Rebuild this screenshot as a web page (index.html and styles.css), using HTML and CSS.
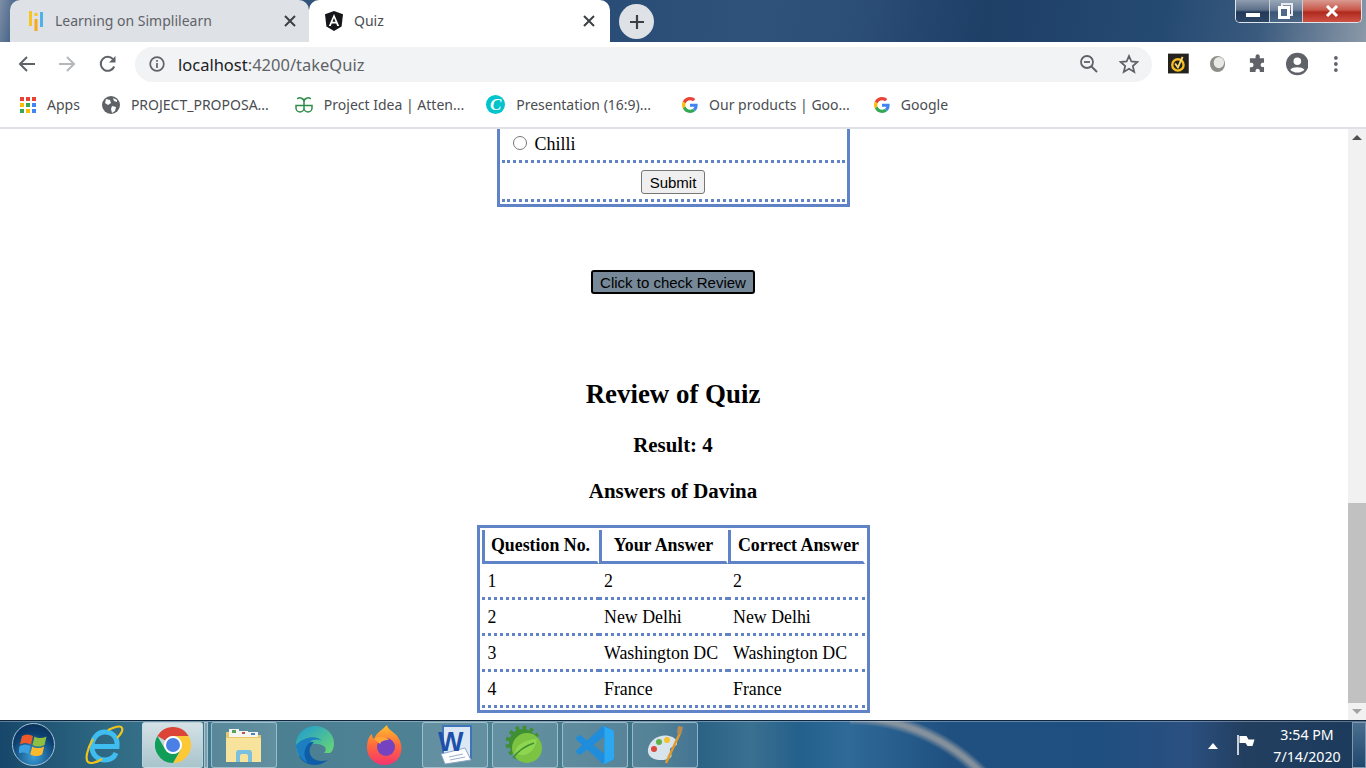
FILE: index.html
```html
<!DOCTYPE html>
<html lang="en">
<head>
    <meta charset="UTF-8">
    <title>Quiz</title>
    <link rel="stylesheet" href="styles.css">
</head>
<body>
    <svg class="defs" width="0" height="0">
        <symbol id="g-logo" viewBox="0 0 48 48">
            <path fill="#EA4335" d="M24 9.5c3.54 0 6.71 1.22 9.21 3.6l6.85-6.85C35.9 2.38 30.47 0 24 0 14.62 0 6.51 5.38 2.56 13.22l7.98 6.19C12.43 13.72 17.74 9.5 24 9.5z"/>
            <path fill="#4285F4" d="M46.98 24.55c0-1.57-.15-3.09-.38-4.55H24v9.02h12.94c-.58 2.96-2.26 5.48-4.78 7.18l7.73 6c4.51-4.18 7.09-10.36 7.09-17.65z"/>
            <path fill="#FBBC05" d="M10.53 28.59c-.48-1.45-.76-2.99-.76-4.59s.27-3.14.76-4.59l-7.98-6.19C.92 16.46 0 20.12 0 24c0 3.88.92 7.54 2.56 10.78l7.97-6.19z"/>
            <path fill="#34A853" d="M24 48c6.48 0 11.93-2.13 15.89-5.81l-7.73-6c-2.15 1.45-4.92 2.3-8.16 2.3-6.26 0-11.57-4.22-13.47-9.91l-7.98 6.19C6.51 42.62 14.62 48 24 48z"/>
        </symbol>
    </svg>

    <!-- Tab strip -->
    <div class="frame">
        <div class="tab tab-off">
            <svg width="16" height="20" viewBox="0 0 16 20">
                <rect x="1" y="0" width="3" height="15" fill="#f7c325"/>
                <rect x="6.5" y="8" width="3" height="12" fill="#f7a81b"/>
                <rect x="6.5" y="2" width="3" height="3" fill="#f7c325"/>
                <rect x="12" y="1" width="3" height="15" fill="#4fb3ea"/>
            </svg>
            <span class="tab-title">Learning on Simplilearn</span>
            <svg class="tab-close" width="12" height="12" viewBox="0 0 12 12"><path d="M1 1l10 10M11 1 1 11" stroke="#3c4043" stroke-width="2"/></svg>
        </div>
        <div class="tab tab-on">
            <svg width="18" height="20" viewBox="0 0 18 20">
                <path d="M9 0 18 3.2 16.6 15.6 9 20 1.4 15.6 0 3.2z" fill="#16161a"/>
                <path d="M9 3 3.8 15h2l1-2.6h4.4l1 2.6h2L9 3zm-1.5 7.8L9 7l1.5 3.800z" fill="#fff"/>
            </svg>
            <span class="tab-title">Quiz</span>
            <svg class="tab-close" width="12" height="12" viewBox="0 0 12 12"><path d="M1 1l10 10M11 1 1 11" stroke="#3c4043" stroke-width="2"/></svg>
        </div>
        <div class="new-tab">
            <svg width="16" height="16" viewBox="0 0 16 16"><path d="M8 1v14M1 8h14" stroke="#3c4043" stroke-width="2.200"/></svg>
        </div>
        <div class="win-controls">
            <div class="win-btn win-min"><span class="min-bar"></span></div>
            <div class="win-btn win-max"><span class="max-back"></span><span class="max-front"></span></div>
            <div class="win-btn win-close">
                <svg width="14" height="12" viewBox="0 0 14 12"><path d="M2 1l10 10M12 1 2 11" stroke="#fff" stroke-width="3"/></svg>
            </div>
        </div>
    </div>

    <!-- Address bar -->
    <div class="toolbar">
        <svg class="nav-icon" width="18" height="18" viewBox="0 0 18 18"><path d="M17 9H2.500M9 2 2 9l7 7" fill="none" stroke="#5f6368" stroke-width="2"/></svg>
        <svg class="nav-icon" width="18" height="18" viewBox="0 0 18 18"><path d="M1 9h14.500M9 2l7 7-7 7" fill="none" stroke="#b4b7bb" stroke-width="2"/></svg>
        <svg class="nav-icon" width="18" height="18" viewBox="0 0 18 18"><path d="M15.200 11.500A7 7 0 1 1 14 4.200" fill="none" stroke="#5f6368" stroke-width="2"/><path d="M16.500 1v6.500H10z" fill="#5f6368"/></svg>
        <div class="omnibox">
            <svg width="16" height="16" viewBox="0 0 16 16"><circle cx="8" cy="8" r="6.800" fill="none" stroke="#5f6368" stroke-width="1.700"/><path d="M8 7v5M8 4v1.800" stroke="#5f6368" stroke-width="1.700"/></svg>
            <span class="url"><span class="url-host">localhost</span>:4200/takeQuiz</span>
            <svg class="zoom-out" width="20" height="20" viewBox="0 0 20 20"><circle cx="8" cy="8" r="6" fill="none" stroke="#5f6368" stroke-width="1.800"/><path d="M5 8h6" stroke="#5f6368" stroke-width="1.800"/><path d="M12.500 12.500 18 18" stroke="#5f6368" stroke-width="2"/></svg>
            <svg class="star" width="20" height="20" viewBox="0 0 20 20"><path d="M10 2l2.400 5.500 6 .5-4.600 4 1.400 5.900L10 14.800 4.800 17.900l1.400-5.900-4.600-4 6-.5z" fill="none" stroke="#5f6368" stroke-width="1.800"/></svg>
        </div>
        <div class="ext-icons">
            <svg width="22" height="22" viewBox="0 0 22 22"><rect width="22" height="21" fill="#24221f"/><circle cx="10.500" cy="12" r="6" fill="none" stroke="#f5bd1f" stroke-width="2.500"/><path d="M7.500 10.500l3 4 5-11" fill="none" stroke="#f5d76e" stroke-width="2"/></svg>
            <svg width="18" height="20" viewBox="0 0 18 20"><ellipse cx="9" cy="10" rx="8" ry="8.500" fill="#8d8d8a"/><ellipse cx="10.500" cy="8.500" rx="5.500" ry="6" fill="#e8e8e4"/></svg>
            <svg width="20" height="20" viewBox="0 0 20 20"><path d="M8 1.500a2.300 2.300 0 0 1 4.500 0V4H17v4.800h-1.800a2.300 2.300 0 0 0 0 4.500H17V18.500H12.500v-1.700a2.300 2.300 0 0 0-4.500 0v1.700H2V13.500h1.500a2.400 2.400 0 0 0 0-4.800H2V4h6z" fill="#5f6368"/></svg>
            <svg width="24" height="24" viewBox="0 0 24 24"><circle cx="12" cy="12" r="12" fill="#5f6368"/><circle cx="12" cy="9" r="4" fill="#fff"/><path d="M4.500 18c2-3.500 13-3.500 15 0-3.500 4-11.500 4-15 0z" fill="#fff"/></svg>
            <svg width="4" height="18" viewBox="0 0 4 18"><circle cx="2" cy="2.500" r="2" fill="#5f6368"/><circle cx="2" cy="9" r="2" fill="#5f6368"/><circle cx="2" cy="15.500" r="2" fill="#5f6368"/></svg>
        </div>
    </div>

    <!-- Bookmarks -->
    <div class="bookmarks">
        <div class="bm">
            <svg width="16" height="16" viewBox="0 0 16 16">
                <rect width="4" height="4" fill="#ea4335"/><rect x="6" width="4" height="4" fill="#ea4335"/><rect x="12" width="4" height="4" fill="#ea4335"/>
                <rect y="6" width="4" height="4" fill="#fbbc05"/><rect x="6" y="6" width="4" height="4" fill="#34a853"/><rect x="12" y="6" width="4" height="4" fill="#4285f4"/>
                <rect y="12" width="4" height="4" fill="#34a853"/><rect x="6" y="12" width="4" height="4" fill="#fbbc05"/><rect x="12" y="12" width="4" height="4" fill="#4285f4"/>
            </svg>
            <span>Apps</span>
        </div>
        <div class="bm">
            <svg width="18" height="18" viewBox="0 0 18 18"><circle cx="9" cy="9" r="9" fill="#5f6368"/><path d="M4 3l4 1 1 3-3 2-3-2zM10 10l4 1-1 4-3 2-1-4zM11 2l4 2v2l-3-1z" fill="#fff"/></svg>
            <span>PROJECT_PROPOSA...</span>
        </div>
        <div class="bm">
            <svg width="18" height="18" viewBox="0 0 18 18"><path d="M15.800 3A4 4 0 0 0 9 6V12A4 4 0 0 0 17 12V9.500H1V12A4 4 0 0 0 9 12V6A4 4 0 0 0 2.200 3" fill="none" stroke="#2f8d46" stroke-width="1.500"/></svg>
            <span>Project Idea | Atten...</span>
        </div>
        <div class="bm">
            <span class="canva-icon">C</span>
            <span>Presentation (16:9)...</span>
        </div>
        <div class="bm">
            <svg width="16" height="16"><use href="#g-logo"/></svg>
            <span>Our products | Goo...</span>
        </div>
        <div class="bm">
            <svg width="16" height="16"><use href="#g-logo"/></svg>
            <span>Google</span>
        </div>
    </div>

    <!-- Page -->
    <div class="viewport">
        <main class="page">
            <form class="quiz-card">
                <div class="quiz-row option-row">
                    <input type="radio" name="answer">
                    <label>Chilli</label>
                </div>
                <div class="quiz-row submit-row">
                    <button type="button" class="btn">Submit</button>
                </div>
            </form>

            <button type="button" class="btn btn-review">Click to check Review</button>

            <h2>Review of Quiz</h2>
            <h3>Result: 4</h3>
            <h3 class="answers-title">Answers of Davina</h3>

            <table class="review-table">
                <thead>
                    <tr>
                        <th class="col-no">Question No.</th>
                        <th class="col-yours">Your Answer</th>
                        <th class="col-correct">Correct Answer</th>
                    </tr>
                </thead>
                <tbody>
                    <tr><td>1</td><td>2</td><td>2</td></tr>
                    <tr><td>2</td><td>New Delhi</td><td>New Delhi</td></tr>
                    <tr><td>3</td><td>Washington DC</td><td>Washington DC</td></tr>
                    <tr><td>4</td><td>France</td><td>France</td></tr>
                </tbody>
            </table>
        </main>
        <div class="scrollbar">
            <div class="arrow arrow-up"></div>
            <div class="track"><div class="thumb"></div></div>
            <div class="arrow arrow-down"></div>
        </div>
    </div>

    <!-- Windows taskbar -->
    <div class="taskbar">
        <div class="start-orb">
            <svg width="30" height="28" viewBox="0 0 30 28">
                <path d="M3 5c3.500-2 7-2 11 0l-2 8.500c-4-2-7.500-2-11 0z" fill="#ef5a2a"/>
                <path d="M15.500 5.500c3.500 2 8 2 12 0l-2 8.500c-4 2-8 2-12 0z" fill="#8fbf3f"/>
                <path d="M.7 15c3.500-2 7-2 11 0l-2 8c-4-2-7.500-2-11 0z" fill="#3aa0e0"/>
                <path d="M13.200 15.500c3.500 2 8 2 12 0l-2 8c-4 2-8 2-12 0z" fill="#fdb92c"/>
            </svg>
        </div>
        <div class="task-slot slot-ie">
            <svg width="40" height="40" viewBox="0 0 40 40">
                <path d="M10 21.500h23C34 12 28 7 21 7 13 7 8 14 8 22c0 8 6 13 13 13 5 0 9-2 11-7" fill="none" stroke="#3fbdf0" stroke-width="5"/>
                <path d="M24 5c6-3 13-5 14-2 1 2-1 6-5 10M9 14C3 24 1 34 4 37c2 2 8 1 14-3" fill="none" stroke="#f0c41b" stroke-width="2.200"/>
            </svg>
        </div>
        <div class="task-btn task-active">
            <svg width="36" height="36" viewBox="0 0 36 36">
                <path d="M2.400 9A18 18 0 0 1 33.600 9H18A9 9 0 0 0 10.200 13.500z" fill="#db4437"/>
                <path d="M33.600 9A18 18 0 0 1 18 36L25.800 22.500A9 9 0 0 0 18 9z" fill="#fcc934"/>
                <path d="M18 36A18 18 0 0 1 2.400 9L10.200 22.500A9 9 0 0 0 25.800 22.500z" fill="#0f9d58"/>
                <circle cx="18" cy="18" r="9" fill="#fff"/>
                <circle cx="18" cy="18" r="7" fill="#4a7fe6"/>
            </svg>
        </div>
        <div class="task-sliver"></div>
        <div class="task-btn">
            <svg width="40" height="38" viewBox="0 0 40 38">
                <path d="M2 6h12l3 3h20v27H2z" fill="#e9c868"/>
                <rect x="5" y="3" width="10" height="8" fill="#f4f4f0"/><rect x="14" y="5" width="10" height="6" fill="#f4f4f0"/><rect x="24" y="6" width="10" height="5" fill="#f4f4f0"/>
                <rect x="8" y="4" width="4" height="3" fill="#5aa05a"/><rect x="18" y="6" width="3" height="2" fill="#c0504d"/><rect x="27" y="7" width="4" height="2" fill="#4f81bd"/>
                <path d="M2 12h35v24H2z" fill="#f7e39b"/>
                <path d="M12 36V27q0-3 3-3h10q3 0 3 3v9h-4v-6q0-2-2-2h-4q-2 0-2 2v6z" fill="#7cc0e0"/>
            </svg>
        </div>
        <div class="task-slot slot-edge">
            <svg width="40" height="40" viewBox="0 0 40 40">
                <path d="M20 1C9 1 1 10 1 20c0 4 1 8 3 11C9 18 22 16 30 22c1 2 1 4-1 6h6c3-2 4-6 4-10C39 9 31 1 20 1z" fill="url(#edge-a)"/>
                <path d="M4 31c3 6 9 9 16 9 5 0 9-2 13-5-6 2-14 1-17-4-3-5-1-10 3-14C12 16 6 22 4 31z" fill="#0f5ca8"/>
                <path d="M1 20C1 28 6 35 13 38c-5-6-5-15 2-21 3-3 8-3 12-1C23 10 9 11 1 20z" fill="#1d7fc2"/>
                <defs><linearGradient id="edge-a" x1="0" y1="0" x2="1" y2="1"><stop offset="0" stop-color="#1d98d6"/><stop offset="1" stop-color="#6fdc6a"/></linearGradient></defs>
            </svg>
        </div>
        <div class="task-slot slot-fox">
            <svg width="40" height="42" viewBox="0 0 40 42">
                <path d="M22 1c1 6 8 6 12 14 6 11 1 25-14 26C9 41 1 33 2 21c.5-5 2-9 5-11 0 3 1 4 2 5 2-6 7-8 13-14z" fill="url(#fox-a)"/>
                <circle cx="21" cy="23" r="9" fill="#7543c0"/>
                <path d="M9 15c5-3 11-3 15 1-5 0-8 1-9 4-2-2-4-3-6-5z" fill="#ffa436"/>
                <defs><linearGradient id="fox-a" x1="0" y1="0" x2="0" y2="1"><stop offset="0" stop-color="#ffc22e"/><stop offset=".5" stop-color="#ff6b3a"/><stop offset="1" stop-color="#f5336f"/></linearGradient></defs>
            </svg>
        </div>
        <div class="task-btn">
            <div class="word-icon">
                <svg class="word-sheets" width="36" height="40" viewBox="0 0 36 40">
                    <path d="M6 1h28v32H6z" fill="#dce7f5" stroke="#3f74b8" stroke-width="2"/>
                    <path d="M4 29l24-6 6 12-26 4z" fill="#fff" stroke="#8ea6c4"/>
                    <path d="M12 32l14-3M13 35l15-3" stroke="#9bb0cc"/>
                </svg>
                <span class="word-w">W</span>
            </div>
        </div>
        <div class="task-btn">
            <svg width="40" height="42" viewBox="0 0 40 42">
                <circle cx="18" cy="19" r="15" fill="none" stroke="#3f8f33" stroke-width="5" stroke-dasharray="3.500 3.500"/>
                <circle cx="18" cy="19" r="14" fill="#3f8f33"/>
                <circle cx="22" cy="24" r="15" fill="#7cc344"/>
                <path d="M10 30c0-9 9-14 22-15-1 9-7 16-15 16-3 0-5-1-7-1z" fill="#8fd650"/>
                <path d="M8 34c5-7 12-12 21-15" fill="none" stroke="#3f8f33" stroke-width="1.500"/>
            </svg>
        </div>
        <div class="task-btn">
            <svg width="38" height="38" viewBox="0 0 100 100">
                <path fill="#1f8cdc" fill-rule="evenodd" d="M70.9 99.3C72.5 99.9 74.3 99.9 75.9 99.100L96.500 89.200C98.600 88.200 100 86 100 83.600V16.400C100 14 98.600 11.800 96.500 10.800L75.900.9C73.800-.1 71.300.1 69.500 1.400 69.300 1.600 69 1.800 68.800 2.100L29.400 38 12.200 25C10.600 23.800 8.400 23.900 6.900 25.200L1.400 30.300C-.5 31.900-.5 34.800 1.400 36.400L16.200 50 1.400 63.600C-.5 65.200-.5 68.100 1.400 69.700L6.900 74.800C8.400 76.100 10.600 76.200 12.200 75L29.400 62 68.800 97.900C69.400 98.500 70.100 99 70.900 99.300ZM75 27.300 45.100 50 75 72.700Z"/>
                <path fill="#2aa8f2" d="M71 .4 96.500 10.800Q100 13 100 16.400V83.600Q100 87 96.500 89.200L75.900 99.100Q73.500 100 71 99.300 75 96 75 92V8Q75 4 71 .4z"/>
            </svg>
        </div>
        <div class="task-btn">
            <svg width="40" height="40" viewBox="0 0 40 40">
                <path d="M3 24C5 14 15 9 24 11c5 1 9 4 8 8-1 3-6 2-7 5-1 4 4 6 0 9-6 4-24 3-22-9z" fill="#d8e4ec"/>
                <circle cx="9" cy="24" r="3" fill="#d9483b"/>
                <circle cx="14" cy="17" r="3" fill="#5fb04c"/>
                <circle cx="22" cy="15" r="3" fill="#f2c32c"/>
                <path d="M35 8 21 38" stroke="#e09a2b" stroke-width="2.500"/>
                <path d="M33 1l5 1-2 8-4-2z" fill="#b78a55"/>
            </svg>
        </div>
        <div class="tray">
            <svg class="tray-up" width="10" height="6" viewBox="0 0 10 6"><path d="M5 0l5 6H0z" fill="#fff"/></svg>
            <svg class="tray-flag" width="18" height="20" viewBox="0 0 18 20"><path d="M1 0v20" stroke="#fff" stroke-width="1.500"/><path d="M2.500 1h7l2 3.500h6l-2 6.500h-5l-2-3h-6z" fill="#fff"/></svg>
            <div class="clock">
                <div>3:54 PM</div>
                <div>7/14/2020</div>
            </div>
        </div>
        <div class="show-desktop"></div>
    </div>
</body>
</html>
```

FILE: styles.css
```css
/* General */
* {
    box-sizing: border-box;
}

html, body {
    height: 100%;
}

body {
    margin: 0;
    height: 768px;
    display: flex;
    flex-direction: column;
    overflow: hidden;
    background: #fff;
    font-family: "Liberation Serif", serif;
}

.defs {
    position: absolute;
}

/* Tab strip */
.frame {
    height: 42px;
    flex: none;
    display: flex;
    padding-left: 10px;
    background: linear-gradient(100deg, #7e8ea6 0, #3f5f84 1.500%, #274b74 40%, #2e527a 55%, #2c4f78 62%, #1e3f66 72%, #254a72 85%, #3a5a7e 92%, #8b99a8 100%);
}

.tab {
    height: 42px;
    padding-bottom: 1px;
    display: flex;
    align-items: center;
    border-radius: 10px 10px 0 0;
    font-family: "Noto Sans", sans-serif;
    font-size: 14px;
}

.tab-off {
    width: 299px;
    padding-left: 18px;
    padding-right: 13px;
    background: #dee1e6;
    color: #5f6368;
}

.tab-on {
    width: 301px;
    padding-left: 16px;
    padding-right: 15px;
    background: #fff;
    color: #4a4d51;
}

.tab-title {
    flex: 1;
    margin-left: 11px;
}

.new-tab {
    width: 35px;
    height: 35px;
    margin: 4px 0 0 9px;
    border-radius: 50%;
    background: #dee1e6;
    display: flex;
    align-items: center;
    justify-content: center;
}

.win-controls {
    margin: 0 4px 0 auto;
    width: 127px;
    height: 23px;
    display: flex;
    border: 1px solid #dfe5ec;
    border-top: none;
    border-radius: 0 0 5px 5px;
    overflow: hidden;
}

.win-btn {
    display: flex;
    align-items: center;
    justify-content: center;
    position: relative;
}

.win-min {
    width: 34px;
    background: linear-gradient(#8f9db0, #5b6f88 45%, #23395a 55%, #2e4766);
    border-right: 1px solid #c5cdd6;
}

.min-bar {
    width: 14px;
    height: 4px;
    margin-top: 8px;
    background: #fff;
}

.win-max {
    width: 33px;
    background: linear-gradient(#99a7b8, #6d8099 45%, #3c5676 55%, #4c6685);
    border-right: 1px solid #c5cdd6;
}

.max-back {
    position: absolute;
    top: 3px;
    left: 11px;
    width: 12px;
    height: 13px;
    border: 2px solid #e8ecf0;
}

.max-front {
    position: absolute;
    top: 6px;
    left: 8px;
    width: 12px;
    height: 13px;
    border: 3px solid #fff;
    background: #50698a;
}

.win-close {
    flex: 1;
    background: linear-gradient(#d99a90, #c9574a 45%, #b02a1e 55%, #cf5144);
}

/* Address bar */
.toolbar {
    height: 42px;
    flex: none;
    display: flex;
    align-items: center;
    padding-left: 18px;
    background: #fff;
}

.nav-icon {
    margin: 2px 22px 0 0;
    flex: none;
}

.toolbar .nav-icon:nth-child(3) {
    margin-right: 18px;
    margin-left: 1px;
}

.omnibox {
    width: 1017px;
    height: 35px;
    margin-top: 2px;
    padding: 0 13px 0 14px;
    display: flex;
    align-items: center;
    border-radius: 18px;
    background: #f1f3f4;
    font-family: "Noto Sans", sans-serif;
    font-size: 16.500px;
    color: #5f6368;
}

.url {
    margin-left: 13px;
    flex: 1;
}

.url-host {
    color: #202124;
}

.zoom-out {
    margin-right: 20px;
}

.ext-icons {
    width: 186px;
    margin-top: 2px;
    padding-left: 16px;
    display: flex;
    align-items: center;
    gap: 20px;
}

.ext-icons svg:nth-child(3) {
    margin-left: 2px;
}

.ext-icons svg:nth-child(4) {
    margin-left: -1px;
}

.ext-icons svg:nth-child(5) {
    margin-left: 6px;
}

/* Bookmarks */
.bookmarks {
    height: 45px;
    flex: none;
    display: flex;
    align-items: center;
    padding: 0 0 2px 20px;
    border-bottom: 2px solid #dee1e6;
    font-family: "Noto Sans", sans-serif;
    font-size: 14px;
    color: #4a4d51;
}

.bm {
    display: flex;
    align-items: center;
    gap: 11px;
    margin-right: 22px;
    white-space: nowrap;
}

.bm:nth-child(2) {
    margin-right: 26px;
}

.bm:nth-child(3) {
    margin-right: 22px;
}

.bm:nth-child(4) {
    margin-right: 31px;
}

.bm:nth-child(5) {
    margin-right: 24px;
}

.canva-icon {
    width: 19px;
    height: 19px;
    border-radius: 50%;
    background: #00c4cc;
    color: #fff;
    font-family: "Liberation Serif", serif;
    font-style: italic;
    font-weight: bold;
    font-size: 17px;
    line-height: 19px;
    text-align: center;
}

/* Page */
.viewport {
    height: 591px;
    flex: none;
    display: flex;
}

.page {
    flex: 1;
    min-width: 0;
    overflow: hidden;
    padding-right: 2px;
    text-align: center;
    color: #000;
    font-size: 16px;
}

.quiz-card {
    width: 353px;
    margin: 0 auto;
    padding: 0 2px 2px;
    border: 3px solid #6082c6;
    border-top: none;
}

.quiz-row {
    border-bottom: 3px dotted #6082c6;
}

.option-row {
    height: 34px;
    display: flex;
    align-items: center;
    padding-left: 8px;
    font-size: 18px;
}

.option-row input {
    margin: 0 8px 3px 3px;
    width: 14px;
    height: 14px;
}

.submit-row {
    height: 39px;
    padding-top: 7px;
}

.btn {
    width: 64px;
    height: 24px;
    padding: 1px 0 0;
    font-family: "Liberation Sans", sans-serif;
    font-size: 15px;
    color: #000;
    background: #efefef;
    border: 1px solid #767676;
    border-radius: 3px;
}

.btn-review {
    display: block;
    margin: 63px auto 0;
    width: 164px;
    background: #778899;
    border: 2px solid #000;
}

h2 {
    margin: 87px 0 0;
    font-size: 26.900px;
    line-height: 27px;
}

h3 {
    margin: 27px 0 0;
    font-size: 20.900px;
    line-height: 21px;
}

h3.answers-title {
    margin-top: 25px;
}

.review-table {
    width: 393px;
    margin: 23px auto 0;
    padding: 2px;
    table-layout: fixed;
    border-collapse: separate;
    border-spacing: 0;
    border: 3px solid #6082c6;
    text-align: left;
}

.review-table th {
    height: 34px;
    padding: 0 4px;
    border-left: 3px solid #6082c6;
    border-right: 2px solid transparent;
    border-bottom: 3px solid #6082c6;
    font-size: 17.850px;
    text-align: center;
    white-space: nowrap;
}

.review-table th.col-correct {
    padding: 0 1px 0 5px;
}

.col-no {
    width: 117px;
}

.col-yours {
    width: 129px;
}

.review-table td {
    height: 36px;
    padding: 1px 0 0 5.500px;
    border-bottom: 3px dotted #6082c6;
    font-size: 17.850px;
    white-space: nowrap;
}

.review-table td:first-child {
    padding-left: 6px;
}

/* Scrollbar */
.scrollbar {
    width: 18px;
    flex: none;
    display: flex;
    flex-direction: column;
    background: #f1f1f1;
}

.arrow {
    height: 17px;
    flex: none;
    display: flex;
    align-items: center;
    justify-content: center;
}

.arrow::before {
    content: "";
    border-left: 5px solid transparent;
    border-right: 5px solid transparent;
}

.arrow-up::before {
    border-bottom: 5px solid #505050;
}

.arrow-down::before {
    border-top: 5px solid #a3a3a3;
}

.track {
    flex: 1;
    display: flex;
    flex-direction: column;
    justify-content: flex-end;
}

.thumb {
    height: 200px;
    background: #c1c1c1;
}

/* Taskbar */
.taskbar {
    height: 48px;
    flex: none;
    display: flex;
    align-items: center;
    padding-left: 12px;
    border-top: 1px solid #10263e;
    box-shadow: inset 0 1px rgba(255, 255, 255, 0.300);
    background:
        radial-gradient(circle 200px at 0 180px, transparent 176px, rgba(165, 165, 165, 0.750) 182px, rgba(165, 165, 165, 0.750) 185px, transparent 191px) 850px 0 / 200px 48px no-repeat,
        linear-gradient(90deg, #17476a 0, #2f6a84 8%, #4b8092 20%, #4f8294 38%, #3c7088 48%, #2a6285 51%, #3a7090 55%, #24608c 58.500%, #2f6a98 62%, #1f5080 69.500%, #1f4f80 80.500%, #2a5080 87%, #233f60 91%, #1b3a5c 100%);
}

.start-orb {
    width: 43px;
    height: 43px;
    flex: none;
    display: flex;
    align-items: center;
    justify-content: center;
    border-radius: 50%;
    border: 1px solid #a8c4d8;
    background: radial-gradient(circle at 50% 80%, #3a9fd8, #0d3f70 60%, #072a4c);
}

.task-slot {
    flex: none;
    display: flex;
    justify-content: center;
}

.slot-ie {
    width: 40px;
    margin: 0 18px 0 29px;
}

.slot-edge {
    width: 40px;
    margin: 0 30px 0 14px;
}

.slot-fox {
    width: 40px;
    margin-right: 17px;
}

.task-btn {
    width: 66px;
    height: 46px;
    flex: none;
    margin-right: 4px;
    display: flex;
    align-items: center;
    justify-content: center;
    border: 1px solid rgba(190, 215, 225, 0.650);
    border-radius: 3px;
    background: rgba(255, 255, 255, 0.120);
}

.task-active {
    width: 61px;
    margin-right: 1px;
    background: linear-gradient(#d4e2e6, #a9c4cc);
}

.task-sliver {
    width: 4px;
    height: 46px;
    flex: none;
    margin-right: 3px;
    border: 1px solid rgba(190, 215, 225, 0.650);
    background: rgba(255, 255, 255, 0.300);
}

.word-icon {
    width: 36px;
    height: 40px;
    position: relative;
}

.word-sheets {
    position: absolute;
    top: 0;
    left: 0;
}

.word-w {
    position: absolute;
    top: 3px;
    left: 1px;
    font-family: "Liberation Sans", sans-serif;
    font-size: 27px;
    font-weight: bold;
    line-height: 28px;
    color: #1d50a8;
}

.tray {
    margin-left: auto;
    display: flex;
    align-items: center;
    color: #fff;
    font-family: "Noto Sans", sans-serif;
    font-size: 14.200px;
}

.tray-up {
    margin: 3px 19px 0 0;
}

.tray-flag {
    margin-right: 13px;
}

.clock {
    width: 78px;
    padding-top: 2px;
    text-align: center;
    line-height: 22px;
}

.show-desktop {
    width: 14px;
    height: 46px;
    flex: none;
    margin-left: 6px;
    border: 1px solid #7e97ae;
    background: linear-gradient(#4a6e8e, #20486e);
}
```
